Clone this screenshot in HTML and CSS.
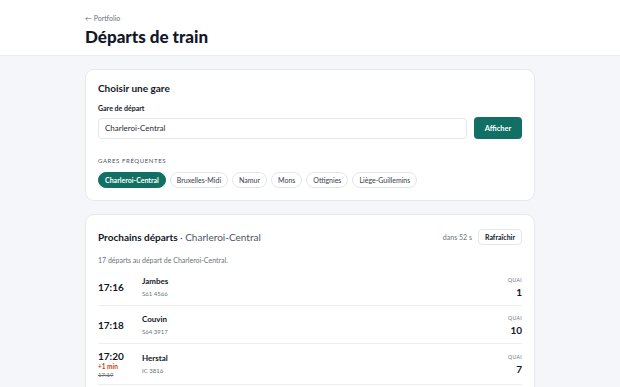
FILE: index.html
```html
<!DOCTYPE html>
<html lang="fr">
<head>
    <meta charset="UTF-8">
    <meta name="viewport" content="width=device-width, initial-scale=1.0">
    <title>Départs de train</title>
    <link rel="stylesheet" href="styles.css">
</head>
<body>
    <header class="page-header">
        <div class="wrap">
            <a class="back-link" href="#">← Portfolio</a>
            <h1 class="page-title">Départs de train</h1>
        </div>
    </header>

    <main class="wrap content">
        <section class="card">
            <h2 class="card-title">Choisir une gare</h2>
            <label class="field-label" for="station">Gare de départ</label>
            <div class="search-row">
                <input class="text-input" id="station" type="text" value="Charleroi-Central">
                <button class="btn btn-primary">Afficher</button>
            </div>
            <div class="section-label">Gares fréquentes</div>
            <div class="chips">
                <button class="chip active">Charleroi-Central</button>
                <button class="chip">Bruxelles-Midi</button>
                <button class="chip">Namur</button>
                <button class="chip">Mons</button>
                <button class="chip">Ottignies</button>
                <button class="chip">Liège-Guillemins</button>
            </div>
        </section>

        <section class="card">
            <div class="card-head">
                <h2 class="card-title">Prochains départs <span class="station-name">· Charleroi-Central</span></h2>
                <div class="refresh">
                    <span class="countdown">dans 52 s</span>
                    <button class="btn btn-light">Rafraîchir</button>
                </div>
            </div>
            <p class="summary">17 départs au départ de Charleroi-Central.</p>

            <ul class="departures">
                <li class="departure">
                    <div class="dep-time"><span class="time">17:16</span></div>
                    <div class="dep-info">
                        <div class="dest">Jambes</div>
                        <div class="train-no">S61 4566</div>
                    </div>
                    <div class="platform">
                        <div class="platform-label">Quai</div>
                        <div class="platform-no">1</div>
                    </div>
                </li>
                <li class="departure">
                    <div class="dep-time"><span class="time">17:18</span></div>
                    <div class="dep-info">
                        <div class="dest">Couvin</div>
                        <div class="train-no">S64 3917</div>
                    </div>
                    <div class="platform">
                        <div class="platform-label">Quai</div>
                        <div class="platform-no">10</div>
                    </div>
                </li>
                <li class="departure">
                    <div class="dep-time">
                        <span class="time">17:20</span>
                        <span class="delay">+1 min</span>
                        <span class="old-time">17:19</span>
                    </div>
                    <div class="dep-info">
                        <div class="dest">Herstal</div>
                        <div class="train-no">IC 3816</div>
                    </div>
                    <div class="platform">
                        <div class="platform-label">Quai</div>
                        <div class="platform-no">7</div>
                    </div>
                </li>
            </ul>
        </section>
    </main>
</body>
</html>
```

FILE: styles.css
```css
*, *::before, *::after {
    box-sizing: border-box;
}

body {
    margin: 0;
    background: #f4f6f9;
    color: #111827;
    font-family: 'Lato', sans-serif;
}

.wrap {
    width: 450px;
    margin: 0 auto;
}

/* header */
.page-header {
    background: #fff;
    border-bottom: 1px solid #e8ebef;
    padding: 13px 0 7px;
}

.back-link {
    display: block;
    font-size: 7px;
    color: #6b7280;
    text-decoration: none;
    line-height: 10px;
}

.page-title {
    margin: 3px 0 0;
    font-size: 17px;
    font-weight: 900;
    line-height: 22px;
}

.content {
    padding: 13px 0;
    display: flex;
    flex-direction: column;
    gap: 13px;
}

/* cards */
.card {
    background: #fff;
    border: 1px solid #e6e9ee;
    border-radius: 9px;
    padding: 11px 12px 12px;
}

.card-title {
    margin: 0;
    font-size: 10px;
    font-weight: 700;
    line-height: 14px;
}

.field-label {
    display: block;
    margin-top: 8px;
    font-size: 7px;
    font-weight: 700;
    line-height: 10px;
}

.search-row {
    display: flex;
    align-items: center;
    gap: 7px;
    margin-top: 4px;
}

.text-input {
    flex: 1;
    height: 21px;
    border: 1px solid #e3e6eb;
    border-radius: 4px;
    padding: 0 6px;
    font-family: inherit;
    font-size: 8px;
    color: #1f2937;
    outline: none;
}

.btn {
    font-family: inherit;
    cursor: pointer;
    border-radius: 4px;
}

.btn-primary {
    width: 48px;
    height: 22px;
    border: none;
    background: #116f63;
    color: #fff;
    font-size: 7.5px;
    font-weight: 700;
}

.section-label {
    margin-top: 17px;
    font-size: 6px;
    letter-spacing: 0.6px;
    text-transform: uppercase;
    color: #4b5563;
    line-height: 9px;
}

.chips {
    display: flex;
    flex-wrap: wrap;
    gap: 4px;
    margin-top: 7px;
}

.chip {
    height: 16px;
    padding: 0 6px;
    border: 1px solid #e3e6eb;
    border-radius: 999px;
    background: #fff;
    font-family: inherit;
    font-size: 7px;
    color: #374151;
}

.chip.active {
    background: #116f63;
    border-color: #116f63;
    color: #fff;
    font-weight: 700;
}

/* departures */
.card-head {
    display: flex;
    align-items: center;
    justify-content: space-between;
    margin-top: 3px;
}

.station-name {
    font-weight: 400;
    color: #4b5563;
}

.refresh {
    display: flex;
    align-items: center;
    gap: 6px;
}

.countdown {
    font-size: 7px;
    color: #6b7280;
}

.btn-light {
    height: 16px;
    padding: 0 6px;
    border: 1px solid #e3e6eb;
    background: #fff;
    font-size: 7px;
    font-weight: 700;
    color: #111827;
}

.summary {
    margin: 10px 0 0;
    font-size: 7px;
    color: #6b7280;
    line-height: 10px;
}

.departures {
    list-style: none;
    margin: 3px 0 0;
    padding: 0;
}

.departure {
    display: flex;
    align-items: center;
    padding: 6px 0;
    border-bottom: 1px solid #eceef1;
    min-height: 38px;
}

.dep-time {
    width: 44px;
    display: flex;
    flex-direction: column;
}

.time {
    font-size: 10px;
    font-weight: 700;
    line-height: 12px;
}

.delay {
    margin-top: 1px;
    font-size: 6.5px;
    font-weight: 700;
    color: #c2410c;
    line-height: 8px;
}

.old-time {
    font-size: 6px;
    color: #6b7280;
    text-decoration: line-through;
    line-height: 7px;
}

.dep-info {
    flex: 1;
}

.dest {
    font-size: 8px;
    font-weight: 700;
    line-height: 11px;
}

.train-no {
    margin-top: 3px;
    font-size: 6px;
    color: #6b7280;
    line-height: 8px;
}

.platform {
    text-align: right;
}

.platform-label {
    font-size: 5px;
    letter-spacing: 0.4px;
    text-transform: uppercase;
    color: #6b7280;
    line-height: 8px;
}

.platform-no {
    margin-top: 2px;
    font-size: 10px;
    font-weight: 700;
    line-height: 12px;
}
```
